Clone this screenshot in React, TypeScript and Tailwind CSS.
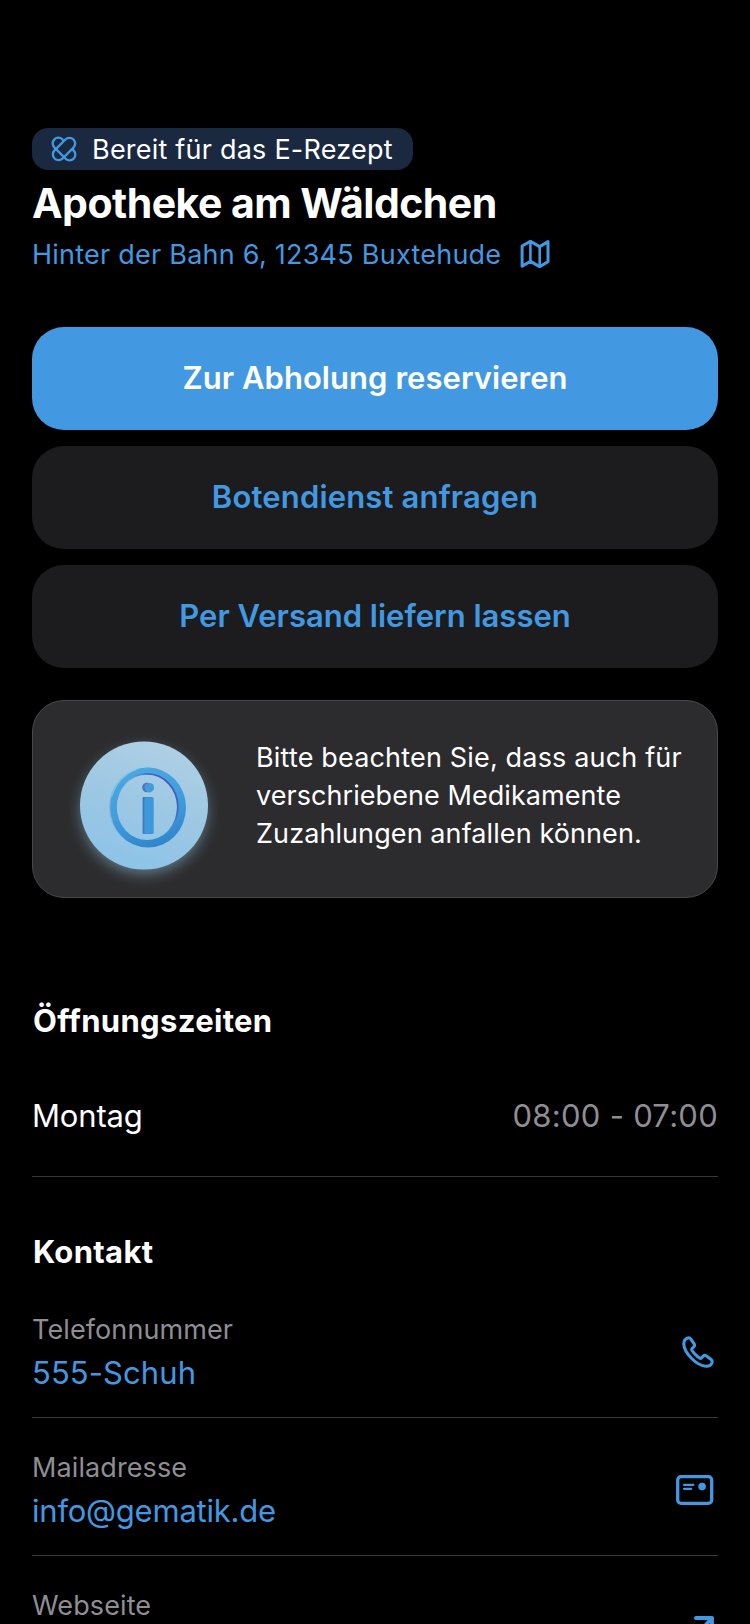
import type { ReactNode } from "react";

const BLUE = "#4299E1";

function RxIcon() {
  return (
    <svg width="26" height="26" viewBox="0 0 26 26" fill="none" stroke={BLUE} strokeWidth="2.3">
      <rect x="7.3" y="-0.4" width="11.4" height="26.8" rx="5.7" transform="rotate(45 13 13)" />
      <path d="M13 4.94 L11.36 3.3 A5.7 5.7 0 0 0 3.3 11.36 L14.64 22.7 A5.7 5.7 0 0 0 22.7 14.64 L21.06 13" />
    </svg>
  );
}

function MapIcon() {
  return (
    <svg width="30" height="30" viewBox="0 0 30 30" fill="none" stroke={BLUE} strokeWidth="3" strokeLinejoin="round" strokeLinecap="round">
      <path d="M2.1 7 L10.4 2.4 L19.7 7.6 L28 2.6 V22.8 L19.7 27.6 L10.4 22.4 L2.1 27.2 Z" />
      <path d="M10.4 2.4 V22.4 M19.7 7.6 V27.6" strokeWidth="2.6" />
    </svg>
  );
}

function PhoneIcon() {
  return (
    <svg width="32" height="32" viewBox="0 0 32 32" fill="none" stroke={BLUE} strokeWidth="3.1" strokeLinejoin="round">
      <path d="M5.9 1.9 C3.4 2.5 1.7 4.6 1.8 8.3 C2 13 5.2 18 9.7 22.5 C14.3 27.1 19.5 30 24 30.2 C27.3 30.3 29.4 28.8 30.1 26.3 C30.4 25.1 30 24.1 28.9 23.2 L24.4 20 C23.2 19.2 22 19.3 21 20.3 L19.4 21.9 C18.9 22.4 18.2 22.4 17.5 22 C16.2 21.2 14.5 19.7 13.2 18.4 C11.9 17.1 10.7 15.6 10 14.5 C9.6 13.8 9.6 13.1 10.1 12.6 L11.7 11 C12.7 10 12.8 8.8 12 7.6 L9 3.3 C8.1 2 7.1 1.6 5.9 1.9 Z" />
    </svg>
  );
}

function MailCardIcon() {
  return (
    <svg width="38" height="30" viewBox="0 0 38 30" fill="none" stroke={BLUE} strokeLinecap="round">
      <rect x="1.7" y="1.7" width="34" height="26.6" rx="3.4" strokeWidth="3.3" />
      <path d="M8 9.8 H17.4 M8 13.8 H15.2" strokeWidth="2.2" />
      <circle cx="26.1" cy="11.6" r="3.8" fill={BLUE} stroke="none" />
    </svg>
  );
}

function ArrowIcon() {
  return (
    <svg width="22" height="24" viewBox="0 0 22 24" fill="none" stroke={BLUE} strokeWidth="3.8" strokeLinecap="round" strokeLinejoin="round">
      <path d="M3.9 2 H20 V18 M20 2 L3 21" />
    </svg>
  );
}

function InfoBadge() {
  return (
    <svg width="176" height="176" viewBox="56 718 176 176" fill="none">
      <defs>
        <linearGradient id="disc" x1="0.7" y1="0" x2="0.35" y2="1">
          <stop offset="0" stopColor="#AFD0E5" />
          <stop offset="0.5" stopColor="#9DC8E3" />
          <stop offset="1" stopColor="#8CC3E8" />
        </linearGradient>
        <linearGradient id="ring" x1="0.3" y1="0" x2="0.6" y2="1">
          <stop offset="0" stopColor="#4AA9DF" />
          <stop offset="0.5" stopColor="#429DDC" />
          <stop offset="1" stopColor="#2F86CB" />
        </linearGradient>
        <linearGradient id="shade" x1="0" y1="1" x2="1" y2="0.2">
          <stop offset="0.5" stopColor="#7FA4E0" stopOpacity="0" />
          <stop offset="0.8" stopColor="#3D6CC8" />
          <stop offset="1" stopColor="#4A4FBE" />
        </linearGradient>
        <filter id="glow" x="-30%" y="-30%" width="160%" height="160%">
          <feGaussianBlur stdDeviation="7.5" />
        </filter>
        <filter id="soft" x="-10%" y="-10%" width="120%" height="120%">
          <feGaussianBlur stdDeviation="0.6" />
        </filter>
      </defs>
      <circle cx="144" cy="811" r="62" fill="#8FBFD8" opacity="0.6" filter="url(#glow)" />
      <circle cx="144" cy="805.5" r="64" fill="url(#disc)" />
      <ellipse cx="147" cy="807.2" rx="34.6" ry="36.2" stroke="#86B6DA" strokeWidth="7" filter="url(#soft)" />
      <path
        fillRule="evenodd"
        fill="url(#ring)"
        d="M110.2 807.6 a37.9 40 0 1 0 75.8 0 a37.9 40 0 1 0 -75.8 0 Z M116.8 807.1 a30.2 33 0 1 0 60.4 0 a30.2 33 0 1 0 -60.4 0 Z"
      />
      <ellipse cx="147.2" cy="807.1" rx="30.6" ry="33.2" stroke="url(#shade)" strokeWidth="1.7" filter="url(#soft)" />
      <path d="M112 796 A 38 40 0 0 1 136 769.6" stroke="#8FD3F2" strokeWidth="1.2" opacity="0.55" filter="url(#soft)" />
      <circle cx="147" cy="787.5" r="4.8" fill="#4E72BE" />
      <circle cx="149.3" cy="787.7" r="4.8" fill="#439DDB" />
      <rect x="142.6" y="797" width="10" height="37" rx="1" fill="#3F77C0" />
      <rect x="144.4" y="797.6" width="9.3" height="36.2" rx="0.8" fill="#3D98DA" />
    </svg>
  );
}

function ContactRow({ label, value, icon }: { label: string; value: ReactNode; icon: ReactNode }) {
  return (
    <div className="flex h-[106px] shrink-0 items-start justify-between border-b border-[#38383A]">
      <div className="flex flex-col gap-[5px]">
        <span className="text-[27px] leading-9 tracking-[0.1px] text-[#8E8E93]">{label}</span>
        {value}
      </div>
      <div className="flex h-20 items-center pr-1">{icon}</div>
    </div>
  );
}

export default function App() {
  return (
    <main className="flex h-[1624px] w-[750px] flex-col overflow-hidden bg-black px-8 pt-32 font-['Inter',sans-serif] text-white">
      <div className="flex h-[42px] w-[381px] shrink-0 items-center rounded-2xl bg-[#1A2940] pl-[19px]">
        <RxIcon />
        <span className="ml-[15px] whitespace-nowrap pt-0.5 text-[27px] leading-10 tracking-[0.22px]">Bereit für das E-Rezept</span>
      </div>
      <h1 className="mt-[9px] shrink-0 whitespace-nowrap text-[41px] font-bold leading-[48px] tracking-[-0.52px]">Apotheke am Wäldchen</h1>
      <a className="mt-[7px] flex h-10 shrink-0 items-center whitespace-nowrap text-[27px] leading-10 text-[#4299E1]">
        <span className="w-[488px] pt-0.5 tracking-[0.24px]">Hinter der Bahn 6, 12345 Buxtehude</span>
        <MapIcon />
      </a>

      <div className="mt-[53px] flex shrink-0 flex-col gap-4 text-[31px] font-semibold text-[#4299E1]">
        <button className="h-[103px] rounded-[32px] bg-[#4299E1] tracking-[0.05px] text-white">Zur Abholung reservieren</button>
        <button className="h-[103px] rounded-[32px] bg-[#1C1C1E] tracking-[0.16px]">Botendienst anfragen</button>
        <button className="h-[103px] rounded-[32px] bg-[#1C1C1E]">Per Versand liefern lassen</button>
      </div>

      <section className="mt-8 flex h-[198px] shrink-0 rounded-[32px] border border-[#48484A] bg-[#2C2C2E]">
        <div className="ml-[23px] mt-[17px] h-[176px] w-[176px] shrink-0">
          <InfoBadge />
        </div>
        <p className="ml-6 mt-[38px] whitespace-nowrap text-[27px] leading-[38px]">
          <span className="tracking-[0.17px]">Bitte beachten Sie, dass auch für</span>
          <br />
          <span className="tracking-[0.06px]">verschriebene Medikamente</span>
          <br />
          <span className="tracking-[0.09px]">Zuzahlungen anfallen können.</span>
        </p>
      </section>

      <h2 className="mt-[103px] shrink-0 pl-px text-[31px] font-bold leading-10 tracking-[0.32px]">Öffnungszeiten</h2>
      <div className="mt-[55px] flex h-[81px] shrink-0 justify-between border-b border-[#38383A] text-[31px] leading-10">
        <span className="tracking-[-0.15px]">Montag</span>
        <span className="tracking-[0.27px] text-[#8E8E93]">08:00 - 07:00</span>
      </div>

      <h2 className="mt-[55px] shrink-0 pl-px text-[31px] font-bold leading-10 tracking-[0.3px]">Kontakt</h2>
      <div className="mt-10 flex shrink-0 flex-col gap-8">
        <ContactRow
          label="Telefonnummer"
          value={<span className="text-[31px] leading-10 tracking-[0.08px] text-[#4299E1]">555-Schuh</span>}
          icon={<PhoneIcon />}
        />
        <ContactRow
          label="Mailadresse"
          value={<span className="text-[31px] leading-10 tracking-[-0.22px] text-[#4299E1]">info@gematik.de</span>}
          icon={<MailCardIcon />}
        />
        <ContactRow label="Webseite" value={null} icon={<ArrowIcon />} />
      </div>
    </main>
  );
}
